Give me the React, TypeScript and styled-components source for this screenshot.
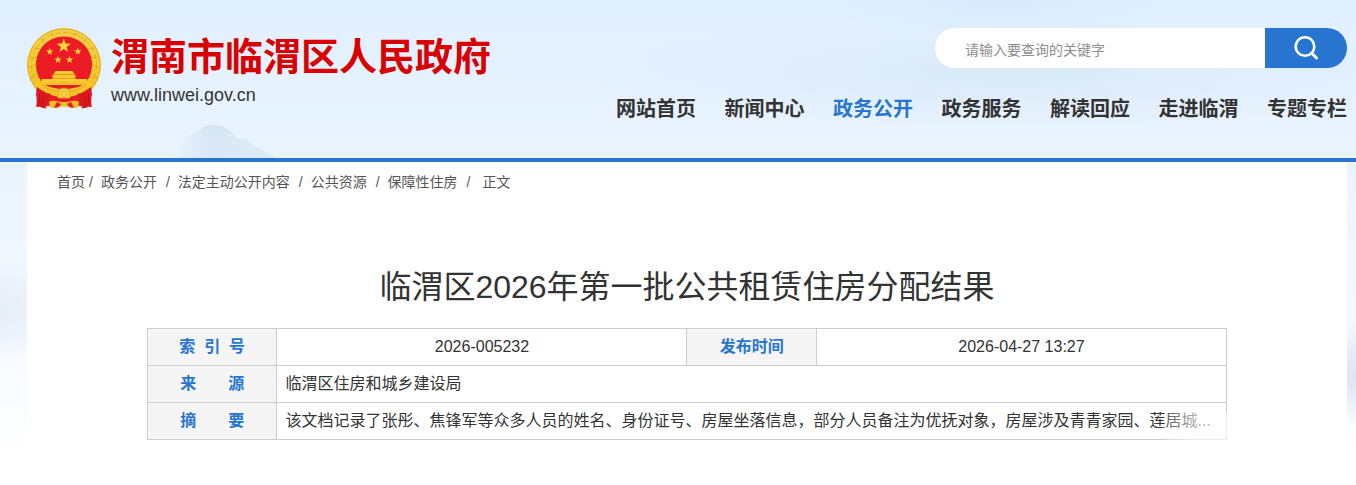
import React from "react";
import styled, { createGlobalStyle } from "styled-components";

const blue = "#2775d0";

const GlobalStyle = createGlobalStyle`
  * { box-sizing: border-box; }
  body {
    margin: 0;
    background: #fff;
    color: #333;
    font-family: "Liberation Sans", "Noto Sans CJK SC", sans-serif;
    font-size: 16px;
  }
  a { color: inherit; text-decoration: none; }
`;

const Page = styled.div`
  min-height: 100vh;
  background:
    radial-gradient(ellipse 90px 60px at 0 310px, rgba(220, 230, 243, 0.6), rgba(226, 234, 246, 0.4) 50%, transparent 80%),
    radial-gradient(ellipse 60px 60px at 100% 375px, rgba(206, 219, 235, 0.7), rgba(214, 224, 240, 0.4) 50%, transparent 90%),
    radial-gradient(ellipse 420px 56px at 1010px 74px, rgba(208, 226, 242, 0.5), transparent),
    radial-gradient(ellipse 200px 40px at 1000px 0, rgba(208, 228, 248, 0.4), transparent),
    linear-gradient(#e0efff 0, #eaf4ff 160px, #f0f7ff 250px, #f7faff 350px, #fff 460px);
  background-repeat: no-repeat;
`;

const Header = styled.header`
  position: relative;
  display: flex;
  justify-content: space-between;
  height: 162px;
  padding: 28px 9px 0 27px;
  border-bottom: 4px solid ${blue};
`;

const Cloud = styled.svg`
  position: absolute;
  left: 168px;
  bottom: 0;
`;

const Brand = styled.a`
  display: flex;
  align-items: flex-start;
  gap: 10px;
`;

const BrandText = styled.div`
  padding-top: 4px;
`;

const SiteName = styled.h1`
  margin: 0;
  color: #d90000;
  font-size: 38px;
  line-height: 50px;
  white-space: nowrap;
`;

const SiteUrl = styled.div`
  font-size: 18px;
  line-height: 26px;
`;

const HeaderSide = styled.div`
  position: relative;
  display: flex;
  flex: 0 1 731px;
  flex-direction: column;
  align-items: flex-end;
  gap: 26px;
`;

const SearchForm = styled.form`
  display: flex;
  width: 412px;
  height: 40px;
  overflow: hidden;
  border-radius: 20px;
  background: #fff;
`;

const SearchInput = styled.input`
  flex: 1;
  min-width: 0;
  padding: 4px 0 0 30px;
  border: 0;
  outline: 0;
  background: transparent;
  font: inherit;
  font-size: 14px;
  &::placeholder { color: #8e8e8e; opacity: 1; }
`;

const SearchButton = styled.button`
  display: flex;
  align-items: center;
  justify-content: center;
  width: 82px;
  padding: 0;
  border: 0;
  background: ${blue};
  cursor: pointer;
`;

const Nav = styled.nav`
  display: flex;
  justify-content: space-between;
  width: 100%;
`;

const NavLink = styled.a<{ $active?: boolean }>`
  color: ${(p) => (p.$active ? blue : "#333")};
  font-size: 20px;
  font-weight: bold;
  line-height: 30px;
  white-space: nowrap;
`;

const Card = styled.main`
  min-height: calc(100vh - 162px);
  margin: 0 9px 0 27px;
  padding: 0 30px;
  background: #fff;
`;

const Breadcrumb = styled.nav`
  display: flex;
  color: #555;
  font-size: 14px;
  line-height: 40px;
  white-space: nowrap;
`;

const Slash = styled.span<{ $before: number; $after: number }>`
  margin-left: ${(p) => p.$before}px;
  margin-right: ${(p) => p.$after}px;
`;

const Title = styled.h2`
  margin: 60px 0 16px;
  font-size: 32px;
  font-weight: normal;
  line-height: 50px;
  text-align: center;
`;

const TableWrap = styled.div`
  position: relative;
  max-width: 1080px;
  margin: 0 auto;
`;

const InfoTable = styled.table`
  width: 100%;
  border-collapse: collapse;
  table-layout: fixed;
`;

const LabelCell = styled.th`
  height: 37px;
  padding: 0;
  border: 1px solid #ccc;
  background: #f5f5f5;
  color: ${blue};
  font-weight: bold;
  line-height: 24px;
`;

const ValueCell = styled.td<{ $center?: boolean }>`
  height: 37px;
  padding: 0 8px;
  border: 1px solid #ccc;
  line-height: 24px;
  text-align: ${(p) => (p.$center ? "center" : "left")};
  white-space: nowrap;
`;

/* Pale veil over the end of the summary line */
const Veil = styled.div`
  position: absolute;
  right: -1px;
  bottom: -1px;
  width: 62px;
  height: 29px;
  background: linear-gradient(90deg, rgba(255, 255, 255, 0.2), rgba(255, 255, 255, 0.6) 45%);
  pointer-events: none;
`;

const starPath = (cx: number, cy: number, r: number) =>
  Array.from({ length: 10 }, (_, i) => {
    const a = (Math.PI / 5) * i - Math.PI / 2;
    const d = i % 2 ? r * 0.4 : r;
    return `${cx + d * Math.cos(a)},${cy + d * Math.sin(a)}`;
  }).join(" ");

const smallStars = [[22.7, 23.7], [50.8, 23.4], [31, 31.8], [42.6, 31.8]];

const Emblem = () => (
  <svg width="74" height="81" viewBox="0 0 74 81" aria-hidden="true">
    <defs>
      <linearGradient id="gold" x1="0" y1="0" x2="0" y2="1">
        <stop offset="0" stopColor="#f0cf48" />
        <stop offset=".5" stopColor="#f8cf2e" />
        <stop offset="1" stopColor="#edb51c" />
      </linearGradient>
    </defs>
    <ellipse cx="37" cy="37" rx="37" ry="37" fill="url(#gold)" />
    <ellipse cx="37" cy="37" rx="36.2" ry="36.200" fill="none" stroke="#dfae2a" strokeWidth="1" />
    <ellipse cx="37" cy="37" rx="32.5" ry="32.500" fill="none" stroke="#e3b02a" strokeWidth="1" strokeDasharray="6 2" />
    <path d="M2 40l7-4M3 30l7-1M7 20l6 1M14 11l4 3M24 5l3 3M72 40l-7-4M71 30l-7-1M67 20l-6 1M60 11l-4 3M50 5l-3 3M4 50l6-5M70 50l-6-5" stroke="#dda52a" strokeWidth="1" />
    <path d="M37 8.500c15.500 0 28 12.200 28 28 0 8-3 15-8 20H17c-5-5-8-12-8-20 0-15.800 12.500-28 28-28z" fill="#ed1c24" />
    <polygon points={starPath(36.8, 18, 7.4)} fill="#fbd935" />
    {smallStars.map(([x, y]) => (
      <polygon key={x} points={starPath(x, y, 3.900)} fill="#fbd935" />
    ))}
    <path d="M28.500 43h17l2 3.200H26.500zM25.500 46.800h23v4h-23z" fill="#f9cc2c" />
    <path d="M26.500 46.500h21" stroke="#e09a18" strokeWidth=".7" />
    <path d="M14.500 51h45.500v6H14.500z" fill="#fccb2f" />
    <path d="M14.500 55.600H60" stroke="#e8a51c" strokeWidth=".7" />
    <path d="M12 57h50l3 10-10 11H19L9 67z" fill="#e31b23" />
    <path d="M9 52c7 3 13 9 28 9s21-6 28-9l1 6c-8 5-14 11-29 11S16 63 8 58z" fill="#f6c42a" />
    <path d="M14.500 57c6 4 12 6 16 6M59.500 57c-6 4-12 6-16 6" fill="none" stroke="#e0a11c" strokeWidth=".9" />
    <path d="M31 66a6 6 0 0 1 12 0v4H31z" fill="#f9cf38" stroke="#e0a11c" strokeWidth=".9" />
    <circle cx="37" cy="66" r="2.400" fill="#fae06a" stroke="#dfa019" strokeWidth=".8" />
    <path d="M10 59c4 3 8 6 14 7-3 4-4 8-5 14.500l-4-.8-2-1-4 .3c2-7-1-12 1-20z" fill="#de1820" />
    <path d="M64 59c-4 3-8 6-14 7 3 4 4 8 5 14.500l4-.8 2-1 4 .3c-2-7 1-12-1-20z" fill="#de1820" />
    <path d="M12.500 65c0 5 0 9-1.500 13M17 67c-1.500 5-2 8-2 12M61.500 65c0 5 0 9 1.500 13M57 67c1.500 5 2 8 2 12" stroke="#b51119" strokeWidth="1" fill="none" />
    <path d="M22 74c5-3 9 0 15 0s10-3 15 0l-1 5.500c-5 1.500-9-1-14-1s-9 2.500-14 1z" fill="#f5bd27" />
    <path d="M30 74l4 2-3 3.500h-4zM44 74l-4 2 3 3.500h4z" fill="#df1b20" />
  </svg>
);

const navItems = ["网站首页", "新闻中心", "政务公开", "政务服务", "解读回应", "走进临渭", "专题专栏"];

const crumbs = [
  { text: "首页", before: 4, after: 8 },
  { text: "政务公开", before: 9, after: 8 },
  { text: "法定主动公开内容", before: 9, after: 8 },
  { text: "公共资源", before: 9, after: 8 },
  { text: "保障性住房", before: 9, after: 12 },
];

export default function App() {
  return (
    <Page>
      <GlobalStyle />
      <Header>
        <Cloud width="112" height="36" viewBox="0 0 112 36" aria-hidden="true">
          <defs>
            <linearGradient id="mist" x1="0" y1="0" x2="0" y2="1">
              <stop offset="0" stopColor="#d2e2f0" />
              <stop offset="1" stopColor="#deebf7" stopOpacity="0" />
            </linearGradient>
            <linearGradient id="mistEdge" x1="0" y1="0" x2="1" y2="0">
              <stop offset="0" stopColor="#dfecf8" stopOpacity="0" />
              <stop offset=".35" stopColor="#dae8f5" />
              <stop offset="1" stopColor="#deebf7" />
            </linearGradient>
          </defs>
          <path d="M0 36c4-4 9-5 13-8 1-10 10-17 19-20 7-6 20-6 27-1 5 3 8 5 10 10 7-2 13 2 17 7 7 2 11 5 14 8 4 1 6 2 8 4z" fill="url(#mistEdge)" />
          <path d="M34 7c7-6 18-5 25 0 5 3 8 5 10 10-5 3-7 6-11 6-8-8-16-10-26-11z" fill="url(#mist)" opacity=".8" />
        </Cloud>
        <Brand href="#">
          <Emblem />
          <BrandText>
            <SiteName>渭南市临渭区人民政府</SiteName>
            <SiteUrl>www.linwei.gov.cn</SiteUrl>
          </BrandText>
        </Brand>
        <HeaderSide>
          <SearchForm onSubmit={(e) => e.preventDefault()}>
            <SearchInput type="text" aria-label="请输入要查询的关键字" placeholder="请输入要查询的关键字" />
            <SearchButton type="submit" aria-label="搜索">
              <svg width="26" height="26" viewBox="0 0 26 26" fill="none" stroke="#fff" strokeWidth="2.600" strokeLinecap="round">
                <circle cx="12" cy="11.500" r="9.300" />
                <path d="M18.800 18.300L23.500 23" strokeWidth="3" />
              </svg>
            </SearchButton>
          </SearchForm>
          <Nav>
            {navItems.map((item) => (
              <NavLink key={item} href="#" $active={item === "政务公开"}>{item}</NavLink>
            ))}
          </Nav>
        </HeaderSide>
      </Header>
      <Card>
        <Breadcrumb>
          {crumbs.map((c) => (
            <React.Fragment key={c.text}>
              <a href="#">{c.text}</a>
              <Slash $before={c.before} $after={c.after}>/</Slash>
            </React.Fragment>
          ))}
          <span>正文</span>
        </Breadcrumb>
        <Title>临渭区2026年第一批公共租赁住房分配结果</Title>
        <TableWrap>
          <InfoTable>
            <colgroup>
              <col style={{ width: "12%" }} />
              <col style={{ width: "38%" }} />
              <col style={{ width: "12%" }} />
              <col style={{ width: "38%" }} />
            </colgroup>
            <tbody>
              <tr>
                <LabelCell scope="row">索&nbsp;&nbsp;引&nbsp;&nbsp;号</LabelCell>
                <ValueCell $center>2026-005232</ValueCell>
                <LabelCell scope="row">发布时间</LabelCell>
                <ValueCell $center>2026-04-27 13:27</ValueCell>
              </tr>
              <tr>
                <LabelCell scope="row">来{"\u3000\u3000"}源</LabelCell>
                <ValueCell colSpan={3}>临渭区住房和城乡建设局</ValueCell>
              </tr>
              <tr>
                <LabelCell scope="row">摘{"\u3000\u3000"}要</LabelCell>
                <ValueCell colSpan={3}>
                  该文档记录了张彤、焦锋军等众多人员的姓名、身份证号、房屋坐落信息，部分人员备注为优抚对象，房屋涉及青青家园、莲居城...
                </ValueCell>
              </tr>
            </tbody>
          </InfoTable>
          <Veil />
        </TableWrap>
      </Card>
    </Page>
  );
}
